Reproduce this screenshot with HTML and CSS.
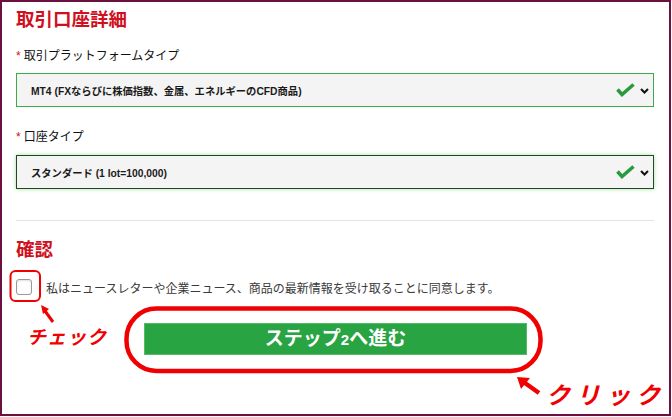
FILE: index.html
```html
<!DOCTYPE html>
<html lang="ja">
<head>
    <meta charset="UTF-8">
    <title>取引口座詳細</title>
    <link rel="stylesheet" href="styles.css">
</head>
<body>
    <div class="frame">
        <h2 class="section-title">取引口座詳細</h2>

        <div class="field-label label-first"><span class="req">*</span>取引プラットフォームタイプ</div>
        <div class="select-box select-valid">
            <span class="select-text">MT4 (FXならびに株価指数、金属、エネルギーのCFD商品)</span>
            <span class="select-icons">
                <svg class="ok-icon" width="19" height="14" viewBox="0 0 19 14"><polyline points="1.5,6.5 6,11.5 17.5,1.5" fill="none" stroke="#2b9a3f" stroke-width="3.6"/></svg>
                <svg class="chev-icon" width="9" height="6" viewBox="0 0 9 6"><polyline points="1,1 4.5,4.5 8,1" fill="none" stroke="#111" stroke-width="2"/></svg>
            </span>
        </div>

        <div class="field-label"><span class="req">*</span>口座タイプ</div>
        <div class="select-box select-focus">
            <span class="select-text">スタンダード (1 lot=100,000)</span>
            <span class="select-icons">
                <svg class="ok-icon" width="19" height="14" viewBox="0 0 19 14"><polyline points="1.5,6.5 6,11.5 17.5,1.5" fill="none" stroke="#2b9a3f" stroke-width="3.6"/></svg>
                <svg class="chev-icon" width="9" height="6" viewBox="0 0 9 6"><polyline points="1,1 4.5,4.5 8,1" fill="none" stroke="#111" stroke-width="2"/></svg>
            </span>
        </div>

        <hr class="divider">

        <h2 class="section-title confirm-title">確認</h2>
        <label class="agree-row">
            <input type="checkbox" class="agree-check">
            <span>私はニュースレターや企業ニュース、商品の最新情報を受け取ることに同意します。</span>
        </label>

        <button class="next-btn" type="button">ステップ<span class="num">2</span>へ進む</button>
    </div>

    <div class="notes">
        <svg class="notes-svg" width="672" height="417" viewBox="0 0 672 417">
            <rect x="10.5" y="271" width="29.5" height="30" rx="5" fill="none" stroke="#f00000" stroke-width="2"/>
            <rect x="126.5" y="308.5" width="414" height="62.5" rx="30" fill="none" stroke="#f00000" stroke-width="4.5"/>
            <line x1="53" y1="322" x2="45" y2="311" stroke="#f00000" stroke-width="3"/>
            <polygon points="41,305 49,309 43,314" fill="#f00000"/>
            <line x1="539" y1="393" x2="525" y2="383" stroke="#f00000" stroke-width="4.5"/>
            <polygon points="517,377 530,378 521,389" fill="#f00000"/>
        </svg>
        <span class="note-text note-check">チェック</span>
        <span class="note-text note-click">クリック</span>
    </div>
</body>
</html>
```

FILE: styles.css
```css
body {
    margin: 0;
    background: #fff;
    font-family: "Liberation Sans", "Noto Sans CJK JP", sans-serif;
    color: #222;
    position: relative;
}
.frame {
    width: 671px;
    height: 416px;
    box-sizing: border-box;
    border: 2px solid #6b1140;
    padding: 6px 15px 0 14px;
    overflow: hidden;
}
.section-title {
    margin: 0;
    font-size: 18.5px;
    line-height: 24px;
    font-weight: bold;
    color: #d0101e;
}
.field-label {
    margin-top: 22px;
    font-size: 12px;
    line-height: 16px;
    color: #111;
}
.label-first {
    margin-top: 16px;
}
.req {
    color: #d0101e;
    margin-right: 3px;
}
.select-box {
    display: flex;
    justify-content: space-between;
    align-items: center;
    box-sizing: border-box;
    height: 34px;
    margin-top: 9px;
    padding: 0 4px 0 14px;
    background: #f4f4f4;
    border: 1px solid #3ea84c;
}
.select-focus {
    margin-top: 10px;
    border-color: #1f4a22;
    box-shadow: 0 0 4px rgba(90, 190, 90, 0.55);
}
.select-text {
    font-size: 10.3px;
    font-weight: bold;
    color: #1a1a1a;
}
.select-icons {
    display: flex;
    align-items: center;
    gap: 5px;
}
.ok-icon {
    display: block;
}
.chev-icon {
    display: block;
    margin-top: 2px;
}
.divider {
    margin: 31px 0 0 0;
    border: none;
    border-top: 1px solid #e3e3e3;
    height: 0;
}
.confirm-title {
    margin-top: 17px;
}
.agree-row {
    display: flex;
    align-items: center;
    gap: 14px;
    margin-top: 17px;
    height: 16px;
    font-size: 12px;
    color: #3a3a3a;
}
.agree-check {
    appearance: none;
    -webkit-appearance: none;
    margin: 0;
    width: 16px;
    height: 16px;
    box-sizing: border-box;
    border: 1px solid #9a9a9a;
    border-radius: 3px;
    background: #fff;
    box-shadow: inset 0 1px 2px rgba(0, 0, 0, 0.12);
}
.next-btn {
    display: block;
    margin: 28px 0 0 128px;
    width: 383px;
    height: 32px;
    padding: 0;
    background: #29a443;
    border: 1px solid #55bb66;
    color: #fff;
    font-family: "Liberation Sans", "Noto Sans CJK JP", sans-serif;
    font-size: 19px;
    font-weight: bold;
    line-height: 30px;
}
.next-btn .num {
    font-size: 15px;
}
.notes {
    position: absolute;
    top: 0;
    left: 0;
    width: 672px;
    height: 417px;
    pointer-events: none;
}
.notes-svg {
    position: absolute;
    top: 0;
    left: 0;
}
.note-text {
    position: absolute;
    color: #f00000;
    font-family: "Noto Sans CJK JP", sans-serif;
    font-weight: bold;
    font-style: italic;
    white-space: nowrap;
}
.note-check {
    left: 27px;
    top: 324px;
    font-size: 19px;
    line-height: 24px;
    letter-spacing: 1px;
}
.note-click {
    left: 546px;
    top: 380px;
    font-size: 24px;
    line-height: 28px;
    letter-spacing: 6px;
}
```
